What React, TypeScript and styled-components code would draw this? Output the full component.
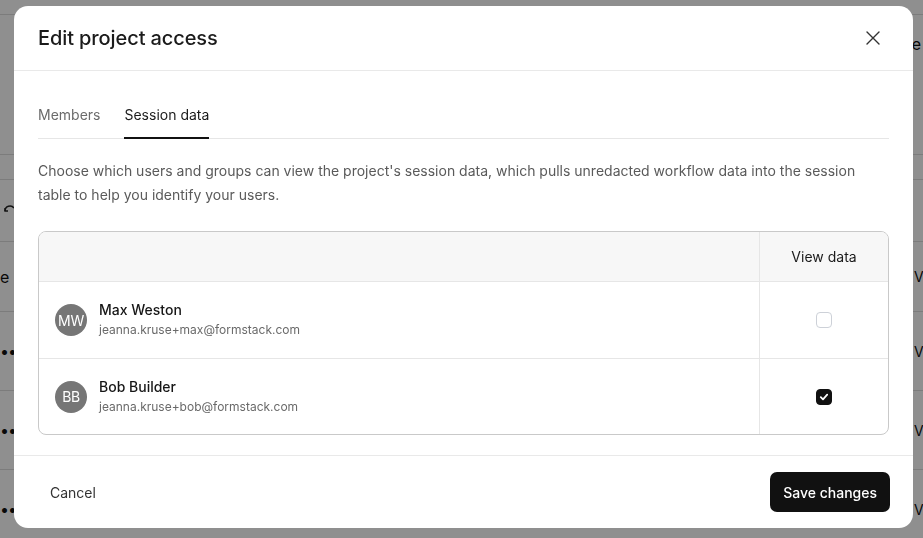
import styled, { createGlobalStyle } from "styled-components";

const GlobalStyle = createGlobalStyle`
  * { box-sizing: border-box; }
  html, body { margin: 0; padding: 0; }
  body {
    font-family: Inter, "Noto Sans", "Liberation Sans", sans-serif;
    color: #1b1b1b;
    background: #fff;
  }
`;

interface Member {
  initials: string;
  name: string;
  email: string;
  canView: boolean;
}

const members: Member[] = [
  { initials: "MW", name: "Max Weston", email: "jeanna.kruse+max@formstack.com", canView: false },
  { initials: "BB", name: "Bob Builder", email: "jeanna.kruse+bob@formstack.com", canView: true },
];

const pageRows = [0, 1, 2];

export default function App() {
  return (
    <>
      <GlobalStyle />
      <Page>
        <PageTop />
        <PageHead>
          <span />
          <PageHeadText>e</PageHeadText>
        </PageHead>
        <PageTabs />
        <PageToolbar>
          <RefreshIcon viewBox="0 0 16 16">
            <path d="M3 8a5 5 0 0 1 9-3" />
            <path d="M3 5v3h3" />
          </RefreshIcon>
        </PageToolbar>
        <PageRow $h={70}>
          <PageCellStart>e</PageCellStart>
          <span />
          <PageCellEnd>V</PageCellEnd>
        </PageRow>
        {pageRows.map((r) => (
          <PageRow key={r} $h={79}>
            <PageCellStart>••</PageCellStart>
            <span />
            <PageCellEnd>V</PageCellEnd>
          </PageRow>
        ))}
      </Page>

      <Overlay>
        <Dialog>
          <DialogHeader>
            <Title>Edit project access</Title>
            <CloseButton aria-label="Close">
              <svg width="14" height="14" viewBox="0 0 14 14">
                <path d="M1 1l12 12M13 1L1 13" stroke="#333" strokeWidth="1.4" strokeLinecap="round" />
              </svg>
            </CloseButton>
          </DialogHeader>

          <DialogBody>
            <Tabs>
              <Tab>Members</Tab>
              <Tab $active>Session data</Tab>
            </Tabs>

            <Description>
              Choose which users and groups can view the project's session data, which pulls
              unredacted workflow data into the session table to help you identify your users.
            </Description>

            <AccessTable>
              <HeadRow>
                <Cell />
                <CheckCell>View data</CheckCell>
              </HeadRow>
              {members.map((m) => (
                <BodyRow key={m.email}>
                  <Cell>
                    <Avatar>{m.initials}</Avatar>
                    <Person>
                      <Name>{m.name}</Name>
                      <Email>{m.email}</Email>
                    </Person>
                  </Cell>
                  <CheckCell>
                    <Checkbox $checked={m.canView}>
                      {m.canView && (
                        <svg width="10" height="10" viewBox="0 0 10 10">
                          <path
                            d="M1.8 5.2l2.2 2.1 4.2-4.6"
                            fill="none"
                            stroke="#fff"
                            strokeWidth="1.8"
                            strokeLinecap="round"
                            strokeLinejoin="round"
                          />
                        </svg>
                      )}
                    </Checkbox>
                  </CheckCell>
                </BodyRow>
              ))}
            </AccessTable>
          </DialogBody>

          <DialogFooter>
            <GhostButton>Cancel</GhostButton>
            <PrimaryButton>Save changes</PrimaryButton>
          </DialogFooter>
        </Dialog>
      </Overlay>
    </>
  );
}

/* page behind the dialog */
const Page = styled.div`
  height: 538px;
  overflow: hidden;
  background: #fff;
  color: #111;
  font-size: 14px;
`;

const PageTop = styled.div`
  height: 15px;
  border-bottom: 1px solid #ddd;
`;

const PageHead = styled.div`
  height: 140px;
  display: flex;
  justify-content: space-between;
  padding-top: 19px;
  border-bottom: 1px solid #ddd;
`;

const PageHeadText = styled.span`
  font-size: 16px;
  padding-right: 2px;
`;

const PageTabs = styled.div`
  height: 25px;
  border-bottom: 1px solid #ddd;
`;

const PageToolbar = styled.div`
  height: 62px;
  display: flex;
  align-items: center;
  border-bottom: 1px solid #ddd;
  padding-left: 2px;
`;

const RefreshIcon = styled.svg`
  width: 16px;
  height: 16px;
  fill: none;
  stroke: #222;
  stroke-width: 1.4;
`;

const PageRow = styled.div<{ $h: number }>`
  height: ${(p) => p.$h}px;
  display: grid;
  grid-template-columns: 12px 1fr 9px;
  align-items: center;
  border-bottom: 1px solid #ddd;
  font-size: 16px;
`;

const PageCellStart = styled.div`
  letter-spacing: -1px;
  white-space: nowrap;
`;

const PageCellEnd = styled.div`
  white-space: nowrap;
  font-size: 14px;
`;

/* dialog */
const Overlay = styled.div`
  position: fixed;
  inset: 0;
  background: rgba(0, 0, 0, 0.44);
  display: flex;
  align-items: flex-start;
  padding: 6px 10px 0 14px;
`;

const Dialog = styled.div`
  width: 899px;
  background: #fff;
  border-radius: 14px;
  display: flex;
  flex-direction: column;
  overflow: hidden;
`;

const DialogHeader = styled.div`
  height: 65px;
  display: flex;
  align-items: center;
  justify-content: space-between;
  padding: 0 24px;
  border-bottom: 1px solid #e9e9e9;
`;

const Title = styled.h2`
  margin: 0;
  font-size: 20px;
  font-weight: 500;
  color: #1b1b1b;
  letter-spacing: -0.1px;
`;

const CloseButton = styled.button`
  width: 32px;
  height: 32px;
  border: none;
  background: transparent;
  display: flex;
  align-items: center;
  justify-content: center;
  cursor: pointer;
  padding: 0;
`;

const DialogBody = styled.div`
  padding: 24px 24px 20px;
  border-bottom: 1px solid #e9e9e9;
`;

const Tabs = styled.div`
  display: flex;
  gap: 24px;
  border-bottom: 1px solid #e6e6e6;
`;

const Tab = styled.div<{ $active?: boolean }>`
  padding: 9px 0 11px;
  line-height: 22px;
  font-size: 14px;
  color: ${(p) => (p.$active ? "#1b1b1b" : "#6b6b6b")};
  border-bottom: 2px solid ${(p) => (p.$active ? "#111" : "transparent")};
  margin-bottom: -1px;
  cursor: pointer;
`;

const Description = styled.p`
  margin: 20px 0 0;
  font-size: 14px;
  line-height: 24px;
  color: #5a5a5a;
`;

const AccessTable = styled.div`
  margin-top: 24px;
  border: 1px solid #c9c9c9;
  border-radius: 8px;
  overflow: hidden;
`;

const HeadRow = styled.div`
  display: grid;
  grid-template-columns: 1fr 129px;
  height: 50px;
  background: #f7f7f7;
  border-bottom: 1px solid #e6e6e6;
`;

const BodyRow = styled.div`
  display: grid;
  grid-template-columns: 1fr 129px;
  height: 76px;
  & + & {
    border-top: 1px solid #e6e6e6;
  }
`;

const Cell = styled.div`
  display: flex;
  align-items: center;
  gap: 12px;
  padding-left: 16px;
`;

const CheckCell = styled.div`
  display: flex;
  align-items: center;
  justify-content: center;
  border-left: 1px solid #e6e6e6;
  font-size: 14px;
  color: #1b1b1b;
`;

const Avatar = styled.div`
  width: 32px;
  height: 32px;
  border-radius: 50%;
  background: #767676;
  color: #fff;
  font-size: 14px;
  display: flex;
  align-items: center;
  justify-content: center;
  letter-spacing: -0.3px;
`;

const Person = styled.div`
  display: flex;
  flex-direction: column;
  gap: 1px;
  margin-top: -1px;
`;

const Name = styled.div`
  font-size: 14px;
  font-weight: 500;
  line-height: 20px;
  color: #161616;
`;

const Email = styled.div`
  font-size: 12px;
  line-height: 18px;
  color: #6a6a6a;
`;

const Checkbox = styled.span<{ $checked: boolean }>`
  width: 16px;
  height: 16px;
  border-radius: 4px;
  display: flex;
  align-items: center;
  justify-content: center;
  background: ${(p) => (p.$checked ? "#111" : "#fff")};
  border: 1px solid ${(p) => (p.$checked ? "#111" : "#cdd1d8")};
`;

const DialogFooter = styled.div`
  height: 72px;
  display: flex;
  align-items: center;
  justify-content: space-between;
  padding: 0 23px 0 24px;
`;

const GhostButton = styled.button`
  height: 40px;
  padding: 0 12px;
  border: none;
  background: transparent;
  font-family: inherit;
  font-size: 14px;
  color: #333;
  cursor: pointer;
`;

const PrimaryButton = styled.button`
  height: 40px;
  padding: 0 13px;
  border: none;
  border-radius: 7px;
  background: #111;
  color: #fff;
  font-family: inherit;
  font-size: 14px;
  font-weight: 500;
  cursor: pointer;
`;
